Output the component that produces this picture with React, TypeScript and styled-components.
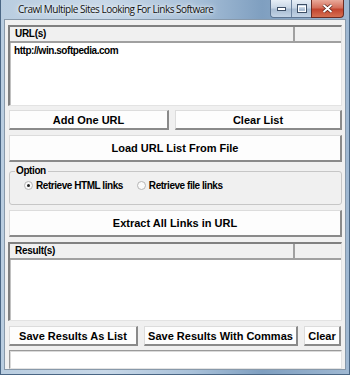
import styled, { createGlobalStyle } from "styled-components";

const GlobalStyle = createGlobalStyle`
  html, body {
    margin: 0;
    padding: 0;
    width: 350px;
    height: 375px;
    overflow: hidden;
    background: #6d8db0;
  }
  * { box-sizing: border-box; }
`;

const Window = styled.div`
  width: 350px;
  height: 375px;
  display: flex;
  flex-direction: column;
  background: linear-gradient(90deg, #b9cde0 0%, #c8d8e8 30%, #a9c1d9 55%, #7f9fc0 75%, #9fb8d2 100%);
  border-left: 1px solid #4a6684;
  border-right: 1px solid #4a6684;
  border-bottom: 1px solid #4a6684;
  font-family: "Liberation Sans", Arial, sans-serif;
`;

const TitleBar = styled.div`
  height: 19px;
  display: flex;
  align-items: flex-start;
  justify-content: space-between;
  padding-left: 17px;
  padding-right: 5px;
  flex-shrink: 0;
`;

const Title = styled.div`
  font-family: "Open Sans", "Noto Sans", sans-serif;
  font-size: 10px;
  letter-spacing: -0.5px;
  line-height: 14px;
  padding-top: 2px;
  color: #111;
  text-shadow: 0 0 6px #eef4fa, 0 0 3px #ffffff;
  white-space: nowrap;
`;

const Caption = styled.div`
  display: flex;
  height: 18px;
`;

const CapGroup = styled.div`
  display: flex;
  border: 1px solid #5d7592;
  border-top: none;
  border-right: none;
  border-radius: 0 0 0 4px;
  overflow: hidden;
`;

const CapButton = styled.div<{ $w: number }>`
  width: ${(p) => p.$w}px;
  height: 17px;
  display: flex;
  align-items: center;
  justify-content: center;
  background: linear-gradient(180deg, #e6eef6 0%, #c9d7e6 45%, #a9bdd3 55%, #c3d4e6 100%);
  & + & { border-left: 1px solid #6d84a0; }
`;

const CloseButton = styled.div`
  width: 33px;
  height: 18px;
  display: flex;
  align-items: center;
  justify-content: center;
  background: linear-gradient(180deg, #e9a99a 0%, #d4705c 45%, #c3452f 55%, #d56f52 100%);
  border: 1px solid #6a2c24;
  border-top: none;
  border-radius: 0 0 4px 0;
`;

const Client = styled.div`
  flex: 1;
  margin: 0 3px 4px 3px;
  background: #f0f0f0;
  border: 1px solid #8899aa;
  padding: 5px 3px 0 3px;
  display: flex;
  flex-direction: column;
  overflow: hidden;
`;

const ListBox = styled.div<{ $h: number; $mt?: number }>`
  height: ${(p) => p.$h}px;
  flex-shrink: 0;
  margin-top: ${(p) => p.$mt ?? 0}px;
  background: #ffffff;
  border-style: solid;
  border-width: 2px 1px 1px 2px;
  border-color: #808080 #e3e3e3 #e3e3e3 #808080;
  box-shadow: inset 1px 1px 0 #c0c0c0;
  display: flex;
  flex-direction: column;
`;

const ListHeader = styled.div`
  height: 16px;
  display: grid;
  grid-template-columns: 1fr 48px;
  background: #f0f0f0;
  border-bottom: 2px solid #a0a0a0;
`;

const HeaderCell = styled.div`
  font-size: 10px;
  letter-spacing: -0.3px;
  font-weight: bold;
  line-height: 14px;
  padding-left: 5px;
  color: #000;
  & + & { border-left: 2px solid #a0a0a0; }
`;

const ListItem = styled.div`
  font-size: 10px;
  letter-spacing: -0.45px;
  font-weight: bold;
  line-height: 12px;
  padding: 2px 0 0 4px;
  color: #000;
`;

const ButtonRow = styled.div<{ $mt: number }>`
  display: flex;
  flex-shrink: 0;
  gap: 6px;
  margin-top: ${(p) => p.$mt}px;
  padding-left: 1px;
`;

const Button = styled.div<{ $w?: number; $mt?: number }>`
  ${(p) => (p.$w ? `width: ${p.$w}px;` : "flex: 1;")}
  flex-shrink: 0;
  height: 20px;
  margin-top: ${(p) => p.$mt ?? 0}px;
  margin-left: ${(p) => (p.$mt !== undefined ? 1 : 0)}px;
  display: flex;
  align-items: center;
  justify-content: center;
  font-size: 11px;
  font-weight: bold;
  color: #000;
  background: #fdfdfd;
  border-style: solid;
  border-width: 1px 2px 2px 1px;
  border-color: #dcdcdc #8a8a8a #8a8a8a #dcdcdc;
  white-space: nowrap;
`;

const Group = styled.fieldset`
  margin: 3px 0 0 1px;
  padding: 0 0 0 14px;
  height: 40px;
  flex-shrink: 0;
  border: 1px solid #c6c6c6;
  border-radius: 3px;
  display: flex;
  gap: 14px;
  align-items: flex-start;
`;

const Legend = styled.legend`
  font-size: 10px;
  letter-spacing: -0.4px;
  font-weight: bold;
  line-height: 12px;
  padding: 0 2px 0 1px;
  margin-left: -9px;
  color: #000;
`;

const RadioLabel = styled.label`
  display: flex;
  align-items: center;
  gap: 3px;
  font-size: 10px;
  letter-spacing: -0.45px;
  font-weight: bold;
  color: #000;
  margin-top: 3px;
`;

const RadioDot = styled.span<{ $on: boolean }>`
  width: 9px;
  height: 9px;
  border-radius: 50%;
  border: 1px solid #b5b5b5;
  background: #fafafa;
  display: flex;
  align-items: center;
  justify-content: center;
  &::after {
    content: "";
    width: 3px;
    height: 3px;
    border-radius: 50%;
    background: ${(p) => (p.$on ? "#222" : "transparent")};
  }
`;

const StatusBox = styled.div`
  height: 19px;
  flex-shrink: 0;
  margin: 4px 0 0 1px;
  background: #ffffff;
  border-style: solid;
  border-width: 1px;
  border-color: #9a9a9a #e3e3e3 #e3e3e3 #9a9a9a;
  box-shadow: inset 1px 1px 0 #dadada;
`;

export default function App() {
  return (
    <>
      <GlobalStyle />
      <Window>
        <TitleBar>
          <Title>Crawl Multiple Sites Looking For Links Software</Title>
          <Caption>
            <CapGroup>
              <CapButton $w={20}>
                <svg width="9" height="4" viewBox="0 0 9 4">
                  <rect x="0.5" y="0.5" width="8" height="3" fill="#fff" stroke="#3d4f66" />
                </svg>
              </CapButton>
              <CapButton $w={20}>
                <svg width="10" height="9" viewBox="0 0 10 9">
                  <rect x="0.5" y="0.5" width="9" height="8" fill="none" stroke="#3d4f66" />
                  <rect x="1.5" y="2.5" width="7" height="5" fill="none" stroke="#fff" />
                </svg>
              </CapButton>
            </CapGroup>
            <CloseButton>
              <svg width="11" height="9" viewBox="0 0 11 9">
                <path d="M1.5 1 L9.5 8 M9.5 1 L1.5 8" stroke="#4a1810" strokeWidth="3.2" />
                <path d="M1.5 1 L9.5 8 M9.5 1 L1.5 8" stroke="#fff" strokeWidth="2" />
              </svg>
            </CloseButton>
          </Caption>
        </TitleBar>
        <Client>
          <ListBox $h={81}>
            <ListHeader>
              <HeaderCell>URL(s)</HeaderCell>
              <HeaderCell />
            </ListHeader>
            <ListItem>http://win.softpedia.com</ListItem>
          </ListBox>
          <ButtonRow $mt={4}>
            <Button $w={160}>Add One URL</Button>
            <Button>Clear List</Button>
          </ButtonRow>
          <Button $mt={5}>Load URL List From File</Button>
          <Group>
            <Legend>Option</Legend>
            <RadioLabel>
              <RadioDot $on />
              Retrieve HTML links
            </RadioLabel>
            <RadioLabel>
              <RadioDot $on={false} />
              Retrieve file links
            </RadioLabel>
          </Group>
          <Button $mt={5}>Extract All Links in URL</Button>
          <ListBox $h={79} $mt={5}>
            <ListHeader>
              <HeaderCell>Result(s)</HeaderCell>
              <HeaderCell />
            </ListHeader>
          </ListBox>
          <ButtonRow $mt={5}>
            <Button $w={129}>Save Results As List</Button>
            <Button $w={154}>Save Results With Commas</Button>
            <Button $w={37}>Clear</Button>
          </ButtonRow>
          <StatusBox />
        </Client>
      </Window>
    </>
  );
}
